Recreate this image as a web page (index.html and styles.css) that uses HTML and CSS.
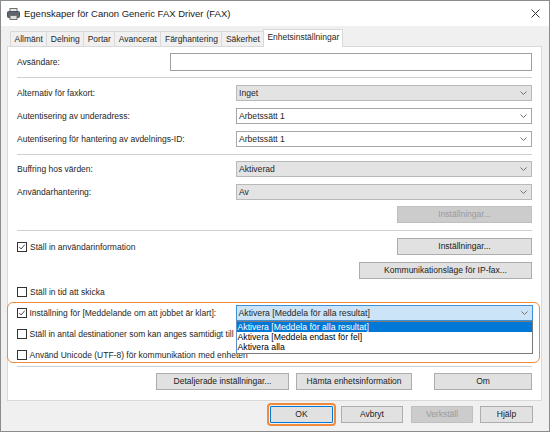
FILE: index.html
```html
<!DOCTYPE html>
<html lang="sv">
<head>
<meta charset="utf-8">
<title>Egenskaper för Canon Generic FAX Driver (FAX)</title>
<link rel="stylesheet" href="styles.css">
</head>
<body>
<div class="window">
  <div class="titlebar">
    <svg class="title-icon" viewBox="0 0 13 12" aria-hidden="true">
      <rect x="3" y="0.5" width="7" height="3" fill="#e8e8e8" stroke="#707070"/>
      <rect x="0.5" y="3.5" width="12" height="6" rx="1" fill="#5d6670" stroke="#4a525a"/>
      <rect x="3" y="7.5" width="7" height="4" fill="#dedede" stroke="#707070"/>
    </svg>
    <span class="title">Egenskaper för Canon Generic FAX Driver (FAX)</span>
    <svg class="close" viewBox="0 0 9 9" aria-hidden="true">
      <path d="M0.5 0.5 L8.5 8.5 M8.5 0.5 L0.5 8.5" stroke="#333" stroke-width="1" fill="none"/>
    </svg>
  </div>

  <div class="tabs">
    <div class="tab">Allmänt</div>
    <div class="tab">Delning</div>
    <div class="tab">Portar</div>
    <div class="tab">Avancerat</div>
    <div class="tab">Färghantering</div>
    <div class="tab">Säkerhet</div>
    <div class="tab active">Enhetsinställningar</div>
  </div>

  <div class="panel">
    <div class="row sender">
      <span class="label">Avsändare:</span>
      <div class="textbox"></div>
    </div>

    <div class="sep sep-a"></div>

    <div class="row field">
      <span class="label">Alternativ för faxkort:</span>
      <div class="select gray"><span class="value">Inget</span><svg class="chev" viewBox="0 0 7 4"><polyline points="0.5,0.5 3.5,3.5 6.5,0.5"/></svg></div>
    </div>
    <div class="row field">
      <span class="label">Autentisering av underadress:</span>
      <div class="select white"><span class="value">Arbetssätt 1</span><svg class="chev" viewBox="0 0 7 4"><polyline points="0.5,0.5 3.5,3.5 6.5,0.5"/></svg></div>
    </div>
    <div class="row field">
      <span class="label">Autentisering för hantering av avdelnings-ID:</span>
      <div class="select white"><span class="value">Arbetssätt 1</span><svg class="chev" viewBox="0 0 7 4"><polyline points="0.5,0.5 3.5,3.5 6.5,0.5"/></svg></div>
    </div>

    <div class="sep sep-b"></div>

    <div class="row field first-after-sep">
      <span class="label">Buffring hos värden:</span>
      <div class="select gray"><span class="value">Aktiverad</span><svg class="chev" viewBox="0 0 7 4"><polyline points="0.5,0.5 3.5,3.5 6.5,0.5"/></svg></div>
    </div>
    <div class="row field">
      <span class="label">Användarhantering:</span>
      <div class="select gray"><span class="value">Av</span><svg class="chev" viewBox="0 0 7 4"><polyline points="0.5,0.5 3.5,3.5 6.5,0.5"/></svg></div>
    </div>
    <div class="row end tight">
      <div class="btn disabled w135">Inställningar...</div>
    </div>

    <div class="sep"></div>

    <div class="row between">
      <label class="check"><span class="box checked"><svg viewBox="0 0 10 10"><polyline points="1.5,5 4,7.5 8.5,2"/></svg></span>Ställ in användarinformation</label>
      <div class="btn w135">Inställningar...</div>
    </div>
    <div class="row end">
      <div class="btn w173">Kommunikationsläge för IP-fax...</div>
    </div>
    <div class="row">
      <label class="check"><span class="box"></span>Ställ in tid att skicka</label>
    </div>

    <div class="highlight">
      <div class="row field hl-first">
        <label class="check label"><span class="box checked"><svg viewBox="0 0 10 10"><polyline points="1.5,5 4,7.5 8.5,2"/></svg></span>Inställning för [Meddelande om att jobbet är klart]:</label>
        <div class="select focused">
          <span class="value">Aktivera [Meddela för alla resultat]</span>
          <svg class="chev" viewBox="0 0 7 4"><polyline points="0.5,0.5 3.5,3.5 6.5,0.5"/></svg>
          <ul class="droplist">
            <li class="selected">Aktivera [Meddela för alla resultat]</li>
            <li>Aktivera [Meddela endast för fel]</li>
            <li>Aktivera alla</li>
          </ul>
        </div>
      </div>
      <div class="row hl-second">
        <label class="check"><span class="box"></span>Ställ in antal destinationer som kan anges samtidigt till</label>
      </div>
      <div class="row hl-third">
        <label class="check"><span class="box"></span>Använd Unicode (UTF-8) för kommunikation med enheten</label>
      </div>
    </div>

    <div class="sep sep-d"></div>

    <div class="row bottom-buttons">
      <div class="btn w133">Detaljerade inställningar...</div>
      <div class="btn w116">Hämta enhetsinformation</div>
      <div class="btn w98 gap-wide">Om</div>
    </div>
  </div>

  <div class="footer">
    <div class="btn default w63">OK</div>
    <div class="btn w62">Avbryt</div>
    <div class="btn disabled w62">Verkställ</div>
    <div class="btn w53 gap-7">Hjälp</div>
  </div>
</div>
</body>
</html>
```

FILE: styles.css
```css
* { box-sizing: border-box; }

html, body {
  margin: 0;
  padding: 0;
}

body {
  width: 550px;
  height: 432px;
  overflow: hidden;
  font-family: "Liberation Sans", Arial, sans-serif;
  font-size: 8.5px;
  color: #262626;
  background: #ffffff;
}

.window {
  width: 550px;
  height: 432px;
  border: 1px solid #8c8c8c;
  background: #f0f0f0;
  display: flex;
  flex-direction: column;
}

/* Title bar */
.titlebar {
  height: 25px;
  background: #ffffff;
  display: flex;
  align-items: center;
  padding-left: 6px;
  flex-shrink: 0;
}

.title-icon {
  width: 13px;
  height: 12px;
  margin-right: 4px;
}

.title {
  flex: 1;
  font-size: 9.5px;
  color: #1a1a1a;
}

.close {
  width: 9px;
  height: 9px;
  margin-right: 9px;
  margin-top: -1px;
}

/* Tabs */
.tabs {
  display: flex;
  align-items: flex-end;
  height: 20px;
  padding-left: 9px;
  flex-shrink: 0;
  position: relative;
  z-index: 2;
}

.tab {
  height: 15px;
  line-height: 14px;
  padding: 0 3.5px;
  border: 1px solid #d9d9d9;
  border-bottom: none;
  border-right: none;
  background: #f0f0f0;
  white-space: nowrap;
}

.tab.active {
  height: 18px;
  line-height: 15px;
  margin-bottom: -1px;
  background: #ffffff;
  border-right: 1px solid #d9d9d9;
  padding: 0 3px 0 3px;
}

/* Panel */
.panel {
  height: 355px;
  margin: 0 7px 0 6px;
  background: #ffffff;
  border: 1px solid #d9d9d9;
  padding: 0 9px;
  display: flex;
  flex-direction: column;
  flex-shrink: 0;
  position: relative;
  z-index: 1;
}

.panel > * { margin-top: 7px; flex-shrink: 0; }

.row {
  display: flex;
  align-items: center;
  white-space: nowrap;
}

.row.end { justify-content: flex-end; }
.row.between { justify-content: space-between; }

.sender { margin-top: 6px; height: 18px; }
.sender .label { width: 153px; }

.textbox {
  flex: 1;
  height: 18px;
  border: 1px solid #a0a0a0;
  background: #fff;
}

.sep {
  height: 1px;
  background: #d0d0d0;
}
.panel > .sep-a { margin-top: 6px; }
.panel > .sep-b { margin-top: 7px; }
.panel > .sep-d { margin-top: 3px; }
.panel > .first-after-sep { margin-top: 6px; }
.panel > .tight { margin-top: 6px; }

.field { height: 16px; }
.field .label { width: 219px; flex-shrink: 0; }

/* Select (combo box) */
.select {
  position: relative;
  flex: 1;
  height: 16px;
  display: flex;
  align-items: center;
  padding-left: 2px;
  font-size: 8.6px;
}
.select .value { flex: 1; }
.select.gray {
  background: #e3e3e3;
  border: 1px solid #b9b9b9;
}
.select.white {
  background: #ffffff;
  border: 1px solid #a8a8a8;
}
.select.focused {
  background: #cce4f7;
  border: 1px solid #3d8fd8;
  font-size: 8.7px;
}

.chev {
  width: 7px;
  height: 4px;
  margin-right: 4px;
  fill: none;
  stroke: #707070;
  stroke-width: 1;
}

.droplist {
  position: absolute;
  top: 15px;
  left: -1px;
  right: -1px;
  height: 33px;
  margin: 0;
  padding: 0;
  list-style: none;
  background: #ffffff;
  border: 1px solid #7a7a7a;
  border-left-color: #5d8fc8;
  z-index: 5;
}
.droplist li {
  height: 10.4px;
  line-height: 10.4px;
  padding-left: 1px;
  color: #000;
}
.droplist li.selected {
  background: #0078d7;
  color: #ffffff;
}

/* Buttons */
.btn {
  height: 17px;
  line-height: 15px;
  text-align: center;
  background: #e1e1e1;
  border: 1px solid #adadad;
  color: #1a1a1a;
  white-space: nowrap;
  flex-shrink: 0;
}
.btn.disabled {
  background: #cccccc;
  border-color: #bfbfbf;
  color: #9a9a9a;
}
.btn.default {
  border-color: #0078d7;
  outline: 2px solid #f08a3c;
  outline-offset: 1px;
  border-radius: 1px;
}

.w53 { width: 53px; }
.w62 { width: 62px; }
.w63 { width: 63px; }
.w98 { width: 98px; }
.w116 { width: 116px; }
.w133 { width: 133px; }
.w135 { width: 135px; }
.w173 { width: 173px; }

.between { height: 17px; }

/* Checkboxes */
.check {
  display: flex;
  align-items: center;
  height: 12px;
}
.box {
  width: 10px;
  height: 10px;
  border: 1px solid #333;
  background: #fff;
  margin-right: 3px;
  flex-shrink: 0;
  display: flex;
}
.box svg {
  width: 8px;
  height: 8px;
  fill: none;
  stroke: #222;
  stroke-width: 1;
}

/* Highlighted (orange) group */
.highlight {
  height: 61px;
  margin: 4px -8px 0 -10px;
  border: 1.5px solid #f08a3c;
  border-radius: 6px;
  padding: 0 6.5px 0 8.5px;
  position: relative;
  z-index: 3;
}
.hl-first { margin-top: 1.5px; }
.hl-second { margin-top: 7px; height: 12px; }
.hl-third { margin-top: 9px; height: 12px; }

/* Bottom button rows */
.bottom-buttons {
  justify-content: flex-end;
  gap: 7px;
  margin-top: 6px;
}
.bottom-buttons .gap-wide { margin-left: 15px; }

.footer {
  display: flex;
  justify-content: flex-end;
  gap: 8px;
  padding: 5px 16px 0 0;
}
.footer .gap-7 { margin-left: -1px; }
```
